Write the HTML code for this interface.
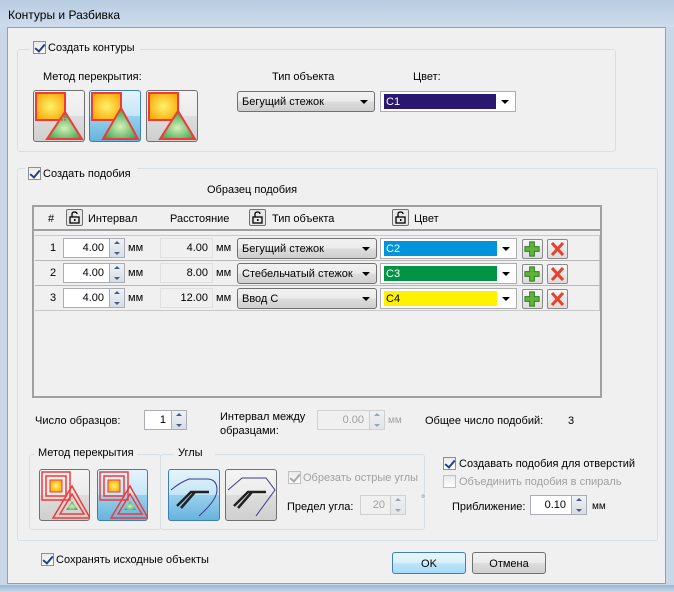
<!DOCTYPE html><html><head><meta charset="utf-8"><style>
*{box-sizing:border-box}
body{margin:0;width:674px;height:592px;overflow:hidden;font-family:"Liberation Sans",sans-serif;font-size:11px;color:#000;background:#c9d8e8;position:relative}
.a{position:absolute;white-space:nowrap}
.title{left:0;top:0;width:674px;height:27px;background:linear-gradient(#b9cde2,#cddcec)}
.client{left:7px;top:27px;width:659px;height:557px;background:#f0f0f0;border:1px solid #8fa3b8}
.grp{position:absolute;border:1px solid #d5dfe5;border-radius:3px}
.cb{position:absolute;width:13px;height:13px;border:1px solid #8e8f8f;background:linear-gradient(#eaeaea,#fff);}
.cb.on::after{content:"";position:absolute;left:3px;top:0px;width:4px;height:8px;border:solid #2a3d8f;border-width:0 2px 2px 0;transform:rotate(40deg)}
.cb.dis{border-color:#c0c0c0}
.cb.dis.on::after{border-color:#a8a8a8}
.lb{position:absolute;white-space:nowrap;background:#f0f0f0;padding:0 3px}
.ibtn{position:absolute;width:52px;height:52px;border:1px solid #707070;border-radius:3px;background:linear-gradient(#f4f4f4 0,#ebebeb 50%,#dddddd 50%,#cfcfcf);overflow:hidden}
.ibtn.sel{border-color:#3c7fb1;background:linear-gradient(#e5f4fc 0,#c4e5f6 50%,#98d1ef 50%,#68b3db)}
.combo{position:absolute;height:21px;border:1px solid #707070;border-radius:3px;background:linear-gradient(#f2f2f2,#ebebeb 50%,#dddddd 50%,#cfcfcf);padding:4px 4px;overflow:hidden}
.combo::after,.ccombo::after{content:"";position:absolute;right:6px;top:8px;border:4px solid transparent;border-top:4px solid #000;border-bottom:0;width:0}
.ccombo{position:absolute;height:21px;border:1px solid #abadb3;background:#fff}
.sw{position:absolute;left:3px;top:2px;bottom:2px;right:19px;padding:2px 2px;color:#fff}
.box{position:absolute;height:20px;border:1px solid #abadb3;background:#fff;text-align:right;padding:3px 4px 0 0}
.ro{position:absolute;height:20px;border:1px solid #e0e0e0;background:#f0f0f0;text-align:right;padding:3px 4px 0 0}
.spin{position:absolute;width:15px;height:18px;top:0;right:0;border-left:1px solid #abadb3;background:linear-gradient(#eef3f7,#d6dde4)}
.spin::before{content:"";position:absolute;left:4px;top:2px;border:3px solid transparent;border-bottom:3px solid #4a5a80;border-top:0}
.spin::after{content:"";position:absolute;left:4px;bottom:2px;border:3px solid transparent;border-top:3px solid #4a5a80;border-bottom:0}
.sbtn{position:absolute;width:21px;height:20px;border:1px solid #8a8a8a;border-radius:2px;background:linear-gradient(#f6f6f6,#dcdcdc)}
.btn{position:absolute;height:22px;border:1px solid #707070;border-radius:3px;background:linear-gradient(#f2f2f2,#ebebeb 50%,#dddddd 50%,#cfcfcf);text-align:center;padding-top:5px}
.lock{position:absolute;width:17px;height:17px;border:1px solid #707070;border-radius:2px;background:#e8e8e8}
.dis{color:#a0a0a0}
</style></head><body>
<div class="a title"></div>
<div class="a" style="left:8px;top:8px;font-size:12px">Контуры и Разбивка</div>
<div class="a client"></div>

<div class="grp" style="left:17px;top:49px;width:599px;height:103px"></div>
<div class="lb" style="left:30px;top:40px;width:110px;height:16px"></div>
<div class="cb on" style="left:33px;top:41px"></div>
<div class="a" style="left:48px;top:42px">Создать контуры</div>
<div class="a" style="left:43px;top:71px">Метод перекрытия:</div>
<div class="a" style="left:272px;top:71px">Тип объекта</div>
<div class="a" style="left:413px;top:71px">Цвет:</div>

<svg width="0" height="0" style="position:absolute"><defs>
<radialGradient id="yg" cx=".5" cy=".5" r=".6"><stop offset="0" stop-color="#fff36a"/><stop offset="1" stop-color="#f7a80a"/></radialGradient>
<radialGradient id="gg" cx=".5" cy=".6" r=".6"><stop offset="0" stop-color="#d8efb8"/><stop offset="1" stop-color="#2aa24a"/></radialGradient>
</defs></svg>

<div class="ibtn" style="left:33px;top:90px"><svg width="50" height="50"><rect x="2" y="2" width="29" height="27" fill="url(#yg)" stroke="#f03a3a" stroke-width="2"/><path d="M31 21 L48 48 L13 48 Z" fill="url(#gg)" stroke="#f03a3a" stroke-width="2"/><path d="M24 29 L31 29 L31 21" fill="none" stroke="#f03a3a" stroke-dasharray="2 1"/></svg></div>
<div class="ibtn sel" style="left:89px;top:90px"><svg width="50" height="50"><rect x="2" y="2" width="29" height="27" fill="url(#yg)" stroke="#f03a3a" stroke-width="2"/><path d="M31 17 L48 48 L13 48 Z" fill="url(#gg)" stroke="#f03a3a" stroke-width="2"/></svg></div>
<div class="ibtn" style="left:146px;top:90px"><svg width="50" height="50"><rect x="2" y="2" width="29" height="27" fill="url(#yg)" stroke="#f03a3a" stroke-width="2"/><path d="M31 20 L48 48 L13 48 Z" fill="url(#gg)" stroke="#f03a3a" stroke-width="2"/></svg></div>

<div class="combo" style="left:237px;top:91px;width:138px">Бегущий стежок</div>
<div class="ccombo" style="left:380px;top:91px;width:136px"><div class="sw" style="background:#2a176f">C1</div></div>

<div class="grp" style="left:17px;top:168px;width:641px;height:373px"></div>
<div class="lb" style="left:25px;top:166px;width:112px;height:16px"></div>
<div class="cb on" style="left:28px;top:167px"></div>
<div class="a" style="left:43px;top:168px">Создать подобия</div>
<div class="a" style="left:207px;top:184px">Образец подобия</div>

<div class="a" style="left:32px;top:205px;width:570px;height:193px;border:2px solid #a0a0a0;background:#f0f0f0"></div>
<div class="a" style="left:34px;top:207px;width:566px;height:24px;background:#f0f0f0;border-bottom:2px solid #a0a0a0"></div>
<div class="a" style="left:48px;top:213px">#</div>
<div class="lock" style="left:66px;top:209px"><svg width="15" height="15"><rect x="3" y="7" width="9" height="6" fill="none" stroke="#000" stroke-width="1.3"/><path d="M5 7 V4 Q5 2 7.5 2 Q10 2 10 4" fill="none" stroke="#000" stroke-width="1.3"/><rect x="7" y="9" width="1.5" height="2" fill="#000"/></svg></div>
<div class="a" style="left:88px;top:213px">Интервал</div>
<div class="a" style="left:170px;top:213px">Расстояние</div>
<div class="lock" style="left:249px;top:209px"><svg width="15" height="15"><rect x="3" y="7" width="9" height="6" fill="none" stroke="#000" stroke-width="1.3"/><path d="M5 7 V4 Q5 2 7.5 2 Q10 2 10 4" fill="none" stroke="#000" stroke-width="1.3"/><rect x="7" y="9" width="1.5" height="2" fill="#000"/></svg></div>
<div class="a" style="left:272px;top:213px">Тип объекта</div>
<div class="lock" style="left:392px;top:209px"><svg width="15" height="15"><rect x="3" y="7" width="9" height="6" fill="none" stroke="#000" stroke-width="1.3"/><path d="M5 7 V4 Q5 2 7.5 2 Q10 2 10 4" fill="none" stroke="#000" stroke-width="1.3"/><rect x="7" y="9" width="1.5" height="2" fill="#000"/></svg></div>
<div class="a" style="left:414px;top:213px">Цвет</div>

<div class="a" style="left:35px;top:235px;width:565px;height:75px;border-top:1px solid #c8c8c8;border-right:1px solid #c8c8c8"></div>
<div class="a" style="left:35px;top:260px;width:565px;border-top:1px solid #b8b8b8"></div>
<div class="a" style="left:35px;top:285px;width:565px;border-top:1px solid #b8b8b8"></div>
<div class="a" style="left:35px;top:310px;width:565px;border-top:1px solid #c8c8c8"></div>

<div class="a" style="left:50px;top:242px">1</div>
<div class="box" style="left:63px;top:238px;width:62px;padding-right:20px">4.00<div class="spin"></div></div>
<div class="a" style="left:128px;top:242px">мм</div>
<div class="ro" style="left:160px;top:238px;width:53px">4.00</div>
<div class="a" style="left:216px;top:242px">мм</div>
<div class="combo" style="left:237px;top:238px;width:140px">Бегущий стежок</div>
<div class="ccombo" style="left:380px;top:238px;width:137px"><div class="sw" style="background:#0094dc">C2</div></div>

<div class="a" style="left:50px;top:267px">2</div>
<div class="box" style="left:63px;top:263px;width:62px;padding-right:20px">4.00<div class="spin"></div></div>
<div class="a" style="left:128px;top:267px">мм</div>
<div class="ro" style="left:160px;top:263px;width:53px">8.00</div>
<div class="a" style="left:216px;top:267px">мм</div>
<div class="combo" style="left:237px;top:263px;width:140px;padding-right:18px"><span style="display:block;overflow:hidden">Стебельчатый стежок</span></div>
<div class="ccombo" style="left:380px;top:263px;width:137px"><div class="sw" style="background:#009444">C3</div></div>

<div class="a" style="left:50px;top:292px">3</div>
<div class="box" style="left:63px;top:288px;width:62px;padding-right:20px">4.00<div class="spin"></div></div>
<div class="a" style="left:128px;top:292px">мм</div>
<div class="ro" style="left:160px;top:288px;width:53px">12.00</div>
<div class="a" style="left:216px;top:292px">мм</div>
<div class="combo" style="left:237px;top:288px;width:140px">Ввод С</div>
<div class="ccombo" style="left:380px;top:288px;width:137px"><div class="sw" style="background:#fff200;color:#000">C4</div></div>

<div class="sbtn" style="left:522px;top:239px"><svg width="19" height="18"><path d="M7 3h5v5h5v5h-5v5h-5v-5h-5v-5h5z" transform="translate(0,-1) scale(0.95)" fill="#5fb33a" stroke="#2e7a1e"/></svg></div>
<div class="sbtn" style="left:547px;top:239px"><svg width="19" height="18"><path d="M4 3L15 15M15 3L4 15" stroke="#e8402a" stroke-width="3"/></svg></div>
<div class="sbtn" style="left:522px;top:264px"><svg width="19" height="18"><path d="M7 3h5v5h5v5h-5v5h-5v-5h-5v-5h5z" transform="translate(0,-1) scale(0.95)" fill="#5fb33a" stroke="#2e7a1e"/></svg></div>
<div class="sbtn" style="left:547px;top:264px"><svg width="19" height="18"><path d="M4 3L15 15M15 3L4 15" stroke="#e8402a" stroke-width="3"/></svg></div>
<div class="sbtn" style="left:522px;top:289px"><svg width="19" height="18"><path d="M7 3h5v5h5v5h-5v5h-5v-5h-5v-5h5z" transform="translate(0,-1) scale(0.95)" fill="#5fb33a" stroke="#2e7a1e"/></svg></div>
<div class="sbtn" style="left:547px;top:289px"><svg width="19" height="18"><path d="M4 3L15 15M15 3L4 15" stroke="#e8402a" stroke-width="3"/></svg></div>

<div class="a" style="left:35px;top:415px">Число образцов:</div>
<div class="box" style="left:144px;top:410px;width:43px;padding-right:20px">1<div class="spin"></div></div>
<div class="a" style="left:220px;top:410px;line-height:14px">Интервал между<br>образцами:</div>
<div class="ro" style="left:317px;top:410px;width:68px;padding-right:20px;color:#a0a0a0;border-color:#d0d0d0">0.00<div class="spin" style="opacity:.5"></div></div>
<div class="a dis" style="left:388px;top:415px;font-size:10px">мм</div>
<div class="a" style="left:425px;top:415px">Общее число подобий:</div>
<div class="a" style="left:568px;top:415px">3</div>

<div class="grp" style="left:29px;top:454px;width:132px;height:76px"></div>
<div class="lb" style="left:35px;top:447px">Метод перекрытия</div>
<div class="ibtn" style="left:39px;top:469px;width:51px"><svg width="50" height="50"><g fill="none" stroke="#f03a3a" stroke-width="1.5"><rect x="2" y="2" width="28" height="28"/><rect x="6" y="6" width="20" height="20"/></g><rect x="10" y="10" width="12" height="12" fill="url(#yg)" stroke="#f03a3a"/><g fill="none" stroke="#f03a3a" stroke-width="1.5"><path d="M32 16 L50 48 L13 48 Z"/><path d="M32 24 L44 44 L20 44 Z"/></g><path d="M32 31 L38 40 L26 40 Z" fill="url(#gg)"/></svg></div>
<div class="ibtn sel" style="left:97px;top:469px;width:51px"><svg width="50" height="50"><g fill="none" stroke="#f03a3a" stroke-width="1.5"><rect x="2" y="2" width="28" height="28"/><rect x="6" y="6" width="20" height="20"/></g><rect x="10" y="10" width="12" height="12" fill="url(#yg)" stroke="#f03a3a"/><g fill="none" stroke="#f03a3a" stroke-width="1.5"><path d="M32 16 L50 48 L13 48 Z"/><path d="M32 24 L44 44 L20 44 Z"/></g><path d="M32 31 L38 40 L26 40 Z" fill="url(#gg)"/></svg></div>

<div class="grp" style="left:160px;top:454px;width:265px;height:76px"></div>
<div class="lb" style="left:174px;top:447px;padding:0 12px 0 4px">Углы</div>
<div class="ibtn sel" style="left:168px;top:469px;width:52px"><svg width="50" height="50"><path d="M2 20 Q10 13 20 9 L38 9 Q48 9 48 20 Q48 30 30 46" fill="none" stroke="#3a3a8a" stroke-width="1"/><path d="M8 36 L22 22 L40 22 M26 22 L12 38" fill="none" stroke="#222" stroke-width="2.5"/></svg></div>
<div class="ibtn" style="left:225px;top:469px;width:52px"><svg width="50" height="50"><path d="M2 20 L16 8 L40 8 L49 20 L30 46" fill="none" stroke="#3a3a8a" stroke-width="1"/><path d="M8 36 L22 22 L40 22 M26 22 L12 38" fill="none" stroke="#222" stroke-width="2.5"/></svg></div>
<div class="cb dis on" style="left:288px;top:471px"></div>
<div class="a dis" style="left:303px;top:472px">Обрезать острые углы</div>
<div class="a" style="left:287px;top:501px">Предел угла:</div>
<div class="ro" style="left:360px;top:495px;width:46px;padding-right:20px;color:#a0a0a0;border-color:#d0d0d0">20<div class="spin" style="opacity:.5"></div></div>
<div class="a" style="left:421px;top:494px;color:#777;font-size:10px">°</div>

<div class="cb on" style="left:443px;top:457px"></div>
<div class="a" style="left:459px;top:458px">Создавать подобия для отверстий</div>
<div class="cb dis" style="left:443px;top:475px"></div>
<div class="a dis" style="left:459px;top:476px">Объединить подобия в спираль</div>
<div class="a" style="left:452px;top:501px">Приближение:</div>
<div class="box" style="left:530px;top:495px;width:57px;padding-right:20px">0.10<div class="spin"></div></div>
<div class="a" style="left:592px;top:501px;font-size:10px">мм</div>

<div class="cb on" style="left:41px;top:553px"></div>
<div class="a" style="left:56px;top:554px">Сохранять исходные объекты</div>
<div class="btn" style="left:392px;top:552px;width:74px;border-color:#3c7fb1;background:linear-gradient(#eaf6fd,#d9f0fc 50%,#bee6fd 50%,#a7d9f5)">OK</div>
<div class="btn" style="left:472px;top:552px;width:74px">Отмена</div>
<div class="a" style="left:0;top:585px;width:674px;height:7px;background:linear-gradient(#9cb6d2,#c7d8ea)"></div>
</body></html>
